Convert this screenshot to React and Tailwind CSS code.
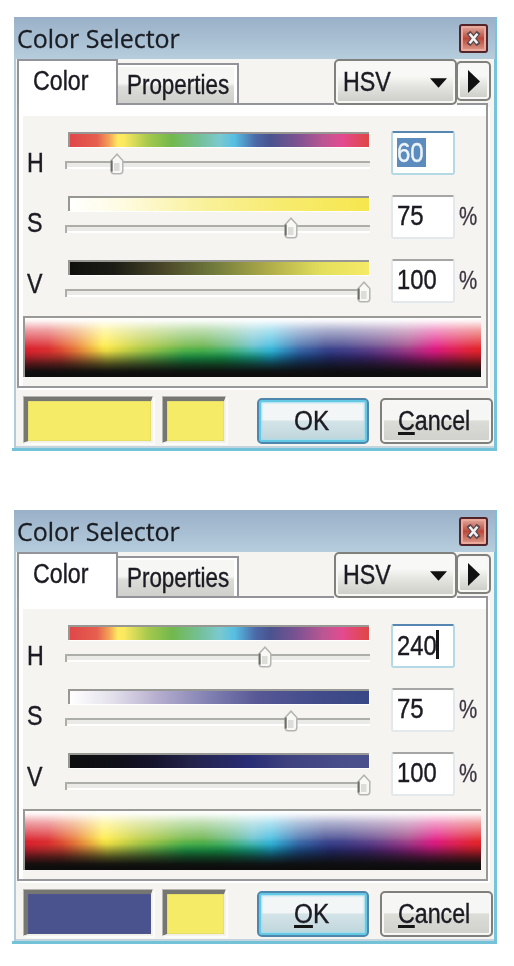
import React from "react";

function Label({ children, className = "", scale = "scale-x-[0.86]" }) {
  return (
    <span
      className={`inline-block origin-left whitespace-nowrap font-['Liberation_Sans',Arial,sans-serif] text-[27px] leading-[27px] text-[#1c1a22] [-webkit-text-stroke:0.4px_currentColor] ${scale} ${className}`}
    >
      {children}
    </span>
  );
}

function TitleBar() {
  return (
    <div className="mr-[2px] flex h-[42px] justify-between bg-linear-to-b from-[#99b0c8] to-[#b6cddd] pl-[3px] pr-[7px] pt-[7px]">
      <span className="inline-block origin-left scale-x-[0.96] whitespace-nowrap font-['Open_Sans','Noto_Sans',sans-serif] text-[26px] leading-[28px] text-[#1b1d24] [-webkit-text-stroke:0.3px_currentColor]">
        Color Selector
      </span>
      <div className="h-[29px] w-[29px] rounded-[3px] border-2 border-[#54242b] bg-[#eba99c] p-[2px]">
        <div className="flex h-full w-full items-center justify-center bg-linear-to-b from-[#dc9c90] via-[#b9483a] to-[#d98f80]">
          <svg viewBox="0 0 17 17" className="h-[17px] w-[17px]">
            <path d="M5 4.2 12 12.8M12 4.2 5 12.8" stroke="#5a4a50" strokeWidth="5" strokeLinecap="square" />
            <path d="M4.6 3.7 12.4 13.3M12.4 3.7 4.6 13.3" stroke="#f4f1f0" strokeWidth="2.6" />
          </svg>
        </div>
      </div>
    </div>
  );
}

function TabRow() {
  return (
    <div className="flex h-[46px] pl-[3px]">
      <div className="relative z-10 h-[46px] w-[101px] border-2 border-b-0 border-[#93949a] bg-white pl-[14px] pt-[7px]">
        <Label>Color</Label>
      </div>
      <div className="flex w-[216px] items-end border-b-2 border-[#93949a]">
        <div className="h-[40px] w-[121px] border-r-2 border-t-2 border-[#93949a] bg-white pr-[3px] pt-[2px]">
          <div className="h-full bg-linear-to-b from-[#f6f6f4] from-45% via-[#dcddd8] via-55% to-[#cfd0cb] pl-[9px] pt-[5px]">
            <Label scale="scale-x-[0.83]">Properties</Label>
          </div>
        </div>
      </div>
      <div className="flex h-[46px] w-[123px] items-center justify-between rounded-[5px] border-2 border-[#80817c] bg-linear-to-b from-[#f8f8f6] from-35% via-[#e4e5e0] via-60% to-[#cbccc6] pl-[7px] pr-[8px] shadow-[inset_0_0_0_2px_#f7f7f5]">
        <Label>HSV</Label>
        <svg viewBox="0 0 18 10" className="mt-[2px] h-[10px] w-[17px]">
          <path d="M0 0H18L9 10Z" fill="#111" />
        </svg>
      </div>
      <div className="h-[46px] w-[31px] border-b-2 border-[#93949a]">
        <div className="-ml-px mt-[2px] flex h-[40px] w-[35px] items-center justify-center rounded-[5px] border-2 border-[#80817c] bg-linear-to-b from-[#f8f8f6] from-35% via-[#e4e5e0] via-60% to-[#cbccc6] shadow-[inset_0_0_0_2px_#f7f7f5]">
          <svg viewBox="0 0 12 23" className="h-[23px] w-[12px]">
            <path d="M0 0 12 11.5 0 23Z" fill="#111" />
          </svg>
        </div>
      </div>
    </div>
  );
}

function Slider({ gradient, thumb }) {
  return (
    <div className="relative w-[305px]">
      <div className="ml-[3px] mt-[1px] h-[15px] w-[301px] border-l-2 border-t-2 border-[#979793] shadow-[1px_1px_0_#ffffff]">
        <div className={`h-full w-full ${gradient}`} />
      </div>
      <div className="mt-[14px] h-[8px] border-l-2 border-t-2 border-[#adaea9] bg-[#eaebe7] shadow-[inset_0_-2px_0_#ffffff]" />
      <svg viewBox="0 0 14 22" className={`absolute top-[22px] h-[22px] w-[14px] ${thumb}`}>
        <path d="M1.2 7.5 7 1.2 12.8 7.5V17.5Q12.8 20.8 10 20.8H4Q1.2 20.8 1.2 17.5Z" fill="#f8f8f6" stroke="#b4b5b1" strokeWidth="1.5" />
        <path d="M4 10H9.5V18H4Z" fill="#dcddd9" />
        <path d="M1.7 7.5V18.5" stroke="#6c6d68" strokeWidth="2" />
      </svg>
    </div>
  );
}

function Channel({ name, labelClass, gradient, thumb, children, focused, percent, height }) {
  return (
    <div className={`flex ${height}`}>
      <div className={`w-[42px] pl-[4px] ${labelClass}`}>
        <Label>{name}</Label>
      </div>
      <Slider gradient={gradient} thumb={thumb} />
      <div
        className={`ml-[21px] flex h-[44px] w-[64px] rounded-[3px] border-2 bg-white pl-[4px] ${
          focused ? "border-[#b5d8e5] border-t-[#5585b0]" : "border-[#e3e8ec] border-t-[#a5a6a5]"
        }`}
      >
        {children}
      </div>
      {percent && (
        <span className="ml-[4px] mt-[8px] inline-block h-[27px] origin-left scale-x-[0.82] font-['Liberation_Sans',Arial,sans-serif] text-[25px] leading-[27px] text-[#3c3540] [-webkit-text-stroke:0.3px_currentColor]">
          %
        </span>
      )}
    </div>
  );
}

function Spectrum() {
  return (
    <div className="relative h-[61px] w-[458px] border-l-2 border-t-2 border-[#999995]">
      <div className="absolute inset-0 bg-[linear-gradient(90deg,#d9222f_0%,#dc2c30_5%,#e9803a_11%,#fdea48_17%,#fdea48_18%,#c0cf48_25%,#74b84a_35%,#6bb34b_39%,#6dbb88_45%,#6bc2cf_50%,#45bde0_54%,#4a76b0_60%,#454d90_66%,#4a4a90_70%,#75508f_78%,#a54d8c_84%,#e31c86_90%,#e3265c_94%,#e2262d_99%)]" />
      <div className="absolute inset-0 bg-[linear-gradient(90deg,#d81f30_0%,#d23d30_8%,#d6903b_14%,#cfc83f_18%,#7db747_26%,#1ea64c_35%,#15a24b_43%,#15a690_50%,#159fc4_54%,#1c5598_60%,#26307c_67%,#42297b_75%,#7c2480_82%,#c5187b_89%,#df202f_98%)] mask-[linear-gradient(to_bottom,transparent_46%,black_68%)]" />
      <div className="absolute inset-0 bg-[linear-gradient(180deg,#fff_0%,#fffffff0_5%,#ffffff90_20%,#ffffff40_38%,#ffffff00_52%,#0d0d0d00_56%,#0d0d0d40_66%,#0d0d0da8_78%,#0d0d0df0_89%,#0d0d0d_95%)]" />
    </div>
  );
}

function Swatch({ className }) {
  return (
    <div className={`h-[47px] border-b-2 border-l-[5px] border-r-2 border-t-[5px] border-b-[#f1f0e6] border-l-[#767672] border-r-[#f1f0e6] border-t-[#767672] shadow-[2px_2px_0_#fbfbfa,inset_0_0_1px_#767672] outline outline-1 -outline-offset-1 outline-[#f5f4f180] ${className}`} />
  );
}

const HUE =
  "bg-[linear-gradient(90deg,#e0474a_0%,#e65f4e_9%,#f2a057_13%,#fdea60_16%,#fbe960_18%,#a6c94c_26%,#72b84c_34%,#74bf95_43%,#7bc9cf_50%,#56bfe2_55%,#4c69a8_62%,#49548f_67%,#7d5292_76%,#bc5793_85%,#e44a90_91%,#e0474a_99%)]";

const YELLOW = {
  saturation: "bg-[linear-gradient(90deg,#fff_0%,#fefbe0_18%,#f9f19a_45%,#f7eb70_70%,#f6e74e_100%)]",
  value: "bg-[linear-gradient(90deg,#0f0f0d_0%,#1c1d15_15%,#4b492a_32%,#717a3c_48%,#a7a548_64%,#e3df5c_84%,#f6ea68_100%)]",
  current: "bg-[#f5eb66]",
  thumb: "left-[45px]",
};

const BLUE = {
  saturation: "bg-[linear-gradient(90deg,#fff_0%,#e1deea_15%,#b3accd_30%,#8584b5_45%,#575795_63%,#434c8b_82%,#384785_100%)]",
  value: "bg-[linear-gradient(90deg,#0e0f0e_0%,#10101a_17%,#15142d_28%,#242349_40%,#292d75_60%,#3e417e_72%,#484e8a_90%,#4a508c_100%)]",
  current: "bg-[#4b538f]",
  thumb: "left-[193px]",
};

function Underlined({ children }) {
  return <span className="underline decoration-[#151515] decoration-[3px] underline-offset-[2px]">{children}</span>;
}

function Dialog({ palette, children, okUnderlined }) {
  return (
    <div className="h-[434px] w-[485px] border-b-[3px] border-[#73c2d8] pl-[2px]">
      <div className="h-[431px] w-[483px] bg-[#f5f4f1] shadow-[inset_-3px_0_0_#73c4dc,inset_2px_0_0_#b2cbdb,inset_0_-2px_0_#c2d5df]">
        <TitleBar />
        <TabRow />
        <div className="ml-[3px] h-[283px] w-[471px] border-2 border-t-0 border-[#97989b] bg-white pl-[4px] pt-[11px] shadow-[2px_2px_0_#ffffff]">
          <div className="h-[270px] bg-[#f5f4f1] pt-[15px]">
            <Channel name="H" labelClass="pt-[19px]" gradient={HUE} thumb={palette.thumb} focused height="h-[64px]">
              {children}
            </Channel>
            <Channel name="S" labelClass="pt-[15px]" gradient={palette.saturation} thumb="left-[219px]" percent height="h-[64px]">
              <Label className="mt-[6px]" scale="scale-x-[0.89]">75</Label>
            </Channel>
            <Channel name="V" labelClass="pt-[12px]" gradient={palette.value} thumb="left-[292px]" percent height="h-[57px]">
              <Label className="mt-[6px]" scale="scale-x-[0.88]">100</Label>
            </Channel>
            <Spectrum />
          </div>
        </div>
        <div className="flex pl-[9px] pt-[8px]">
          <Swatch className={`w-[130px] ${palette.current}`} />
          <Swatch className="ml-[9px] w-[64px] bg-[#f5eb66]" />
          <div className="ml-[31px] mt-[2px] flex h-[46px] w-[112px] justify-center rounded-[5px] border-2 border-[#4f87ac] bg-linear-to-b from-[#f2f6f7] from-47% via-[#d4e4e8] via-50% to-[#bdd4da] pl-[2px] pt-[8px] shadow-[inset_0_0_0_2px_#63c9e4,inset_0_0_2px_3px_#a5dceb]">
            <Label className="origin-center" scale="scale-x-[0.9]">
              {okUnderlined ? <Underlined>O</Underlined> : "O"}K
            </Label>
          </div>
          <div className="ml-[11px] mt-[2px] h-[46px] w-[113px] rounded-[5px] border-2 border-[#7f807b] bg-linear-to-b from-[#f6f6f5] from-47% via-[#dcddd7] via-50% to-[#cfd0cb] pl-[16px] pt-[8px] shadow-[inset_0_0_0_2px_#f7f7f5]">
            <Label>
              <Underlined>C</Underlined>ancel
            </Label>
          </div>
        </div>
      </div>
    </div>
  );
}

export default function App() {
  return (
    <main className="flex h-[966px] w-[514px] flex-col gap-[59px] overflow-hidden bg-white pl-[12px] pt-[17px]">
      <Dialog palette={YELLOW}>
        <div className="mt-[5px] h-[29px] w-[29px] bg-[#5c8bbd] pt-[2px]">
          <Label className="text-[#edf5fb]!" scale="scale-x-[0.89]">60</Label>
        </div>
      </Dialog>
      <Dialog palette={BLUE} okUnderlined>
        <Label className="mt-[7px]" scale="scale-x-[0.88]">240</Label>
        <div className="-ml-[6px] mt-[4px] h-[29px] w-[3px] bg-[#151515]" />
      </Dialog>
    </main>
  );
}
